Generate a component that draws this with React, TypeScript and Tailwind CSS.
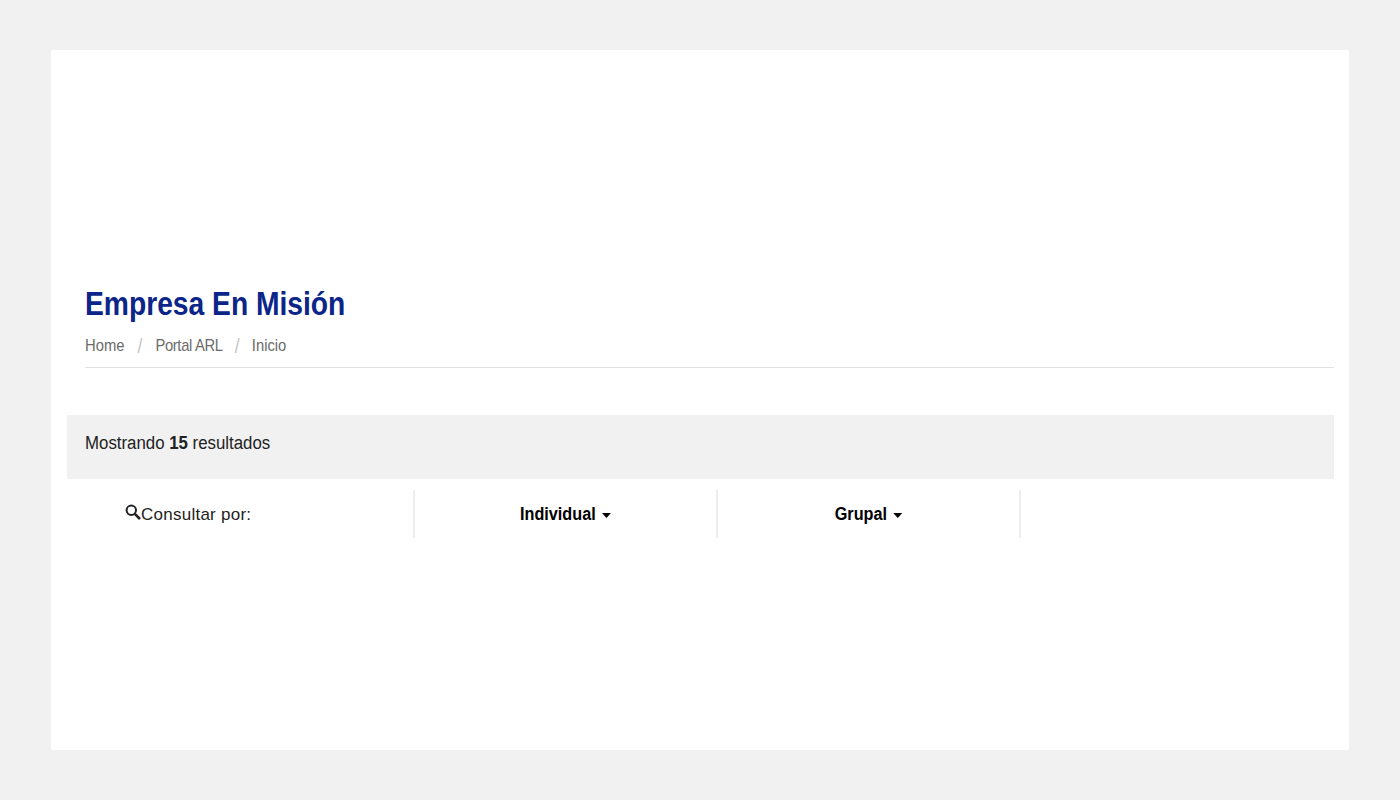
import React from 'react';

const sans = { fontFamily: '"Liberation Sans", Arial, sans-serif' };

function Caret() {
  return <span className="ml-[7px] inline-block h-0 w-0 translate-y-[1px] border-x-[5px] border-t-[5px] border-x-transparent border-t-black align-middle" />;
}

export default function App() {
  return (
    <div className="h-[800px] w-full overflow-hidden bg-[#f1f1f1] px-[51px] py-[50px]" style={sans}>
      <div className="flex h-[700px] flex-col bg-white pl-[16px] pr-[15px] pt-[232px]">
        <div className="ml-[18px] border-b border-[#e2e2e2] pb-[9px]">
          <h1 className="origin-left scale-x-[0.83] text-[34px] font-bold leading-[42px] text-[#0b2588]">Empresa En Misión</h1>
          <div className="mt-[10px] flex origin-left scale-x-[0.87] items-center whitespace-nowrap text-[17px] leading-[24px] text-[#6b6b6b]">
            <span>Home</span>
            <span className="mx-[15px] text-[20px] text-[#c4c4c4]">/</span>
            <span className="tracking-[-0.4px]">Portal ARL</span>
            <span className="mx-[14px] text-[20px] text-[#c4c4c4]">/</span>
            <span>Inicio</span>
          </div>
        </div>

        <div className="mt-[47px] flex h-[64px] items-center bg-[#f1f1f1] pb-[8px] pl-[18px] text-[18px] text-[#222222]">
          <span className="origin-left scale-x-[0.935]">Mostrando <b>15</b> resultados</span>
        </div>

        <div className="mt-[11px] flex h-[48px]">
          <div className="flex w-[348px] items-center border-r-2 border-[#eeeeee] pl-[58px] pt-[1px] text-[17px] tracking-[0.25px] text-[#222222]">
            <svg width="16" height="16" viewBox="0 0 16 16" fill="none" stroke="#222222" className="-translate-y-[3px]">
              <circle cx="6.3" cy="6.3" r="4.7" strokeWidth="2" />
              <path d="M9.8 9.8l5.2 5.2" strokeWidth="2.6" />
            </svg>
            <span>Consultar por:</span>
          </div>
          <div className="flex w-[303px] items-center justify-center border-r-2 border-[#eeeeee] text-black">
            <span className="flex scale-x-[0.9] items-center text-[18px] font-bold">Individual<Caret /></span>
          </div>
          <div className="flex w-[303px] items-center justify-center border-r-2 border-[#eeeeee] text-black">
            <span className="flex scale-x-[0.9] items-center text-[18px] font-bold">Grupal<Caret /></span>
          </div>
        </div>
      </div>
    </div>
  );
}
